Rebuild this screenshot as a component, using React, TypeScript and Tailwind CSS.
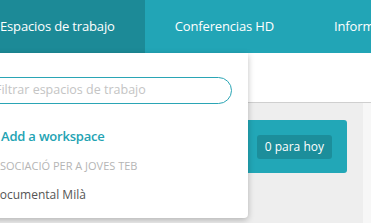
import React from "react";

export default function App() {
  const font = { fontFamily: '"Open Sans", "Liberation Sans", sans-serif' };
  return (
    <div className="relative w-[371px] h-[223px] overflow-hidden bg-white" style={font}>
      <div className="flex h-[53px] bg-[#22a5b6] -ml-[30px] text-white text-[13px] tracking-[-0.15px]">
        <div className="flex items-center px-[30px] bg-[#1c8a97] whitespace-nowrap">Espacios de trabajo</div>
        <div className="flex items-center px-[30px] whitespace-nowrap">Conferencias HD</div>
        <div className="flex items-center px-[30px] whitespace-nowrap">Informes</div>
      </div>
      <div className="h-[50px] bg-white border-b border-[#cfcfcf]" />
      <div className="flex h-[120px] bg-[#eeeeee]">
        <div className="flex-1 pt-[17px] pr-[16px]">
          <div className="h-[53px] bg-[#22a7b7] rounded-[3px] flex items-center justify-end pr-[15px]">
            <div className="h-[24px] px-[8px] flex items-center rounded-[3px] bg-[#1c8e9b] text-white text-[12px] whitespace-nowrap">0 para hoy</div>
          </div>
        </div>
        <div className="w-[8px] bg-[#f7f7f7]" />
      </div>
      <div className="absolute top-[53px] left-[-36px] w-[284px] h-[165px] bg-white rounded-b-[4px] shadow-[0_2px_6px_rgba(0,0,0,0.25)] pt-[24px] px-[16px]">
        <div className="h-[27px] rounded-full border border-[#2aa5b5] flex items-center pl-[14px] text-[12.5px] text-[#c4c4c4] whitespace-nowrap">Filtrar espacios de trabajo</div>
        <div className="mt-[23px] h-[20px] flex items-center pl-[21px] text-[13px] tracking-[-0.2px] font-semibold text-[#23a3b3] whitespace-nowrap">Add a workspace</div>
        <div className="mt-[11px] h-[16px] flex items-center pl-[13px] text-[11px] uppercase text-[#b5b5b5] whitespace-nowrap">Asociació per a joves TEB</div>
        <div className="mt-[11px] h-[20px] flex items-center pl-[11px] text-[12px] text-[#555] whitespace-nowrap">Documental Milà</div>
      </div>
    </div>
  );
}
